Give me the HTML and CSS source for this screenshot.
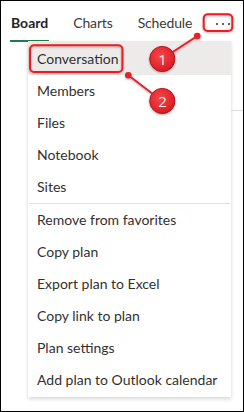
FILE: index.html
```html
<!DOCTYPE html>
<html>
<head>
<meta charset="utf-8">
<link rel="stylesheet" href="styles.css">
</head>
<body>
<div class="frame">
<nav class="tabs">
  <div class="tab active">Board</div>
  <div class="tab">Charts</div>
  <div class="tab">Schedule</div>
  <div class="more"><span class="dot"></span><span class="dot"></span><span class="dot"></span></div>
</nav>
<div class="content"><div class="strip"></div></div>
<div class="menu">
  <div class="item first">Conversation</div>
  <div class="item">Members</div>
  <div class="item">Files</div>
  <div class="item">Notebook</div>
  <div class="item">Sites</div>
  <div class="divider"></div>
  <div class="item">Remove from favorites</div>
  <div class="item">Copy plan</div>
  <div class="item">Export plan to Excel</div>
  <div class="item">Copy link to plan</div>
  <div class="item">Plan settings</div>
  <div class="item">Add plan to Outlook calendar</div>
</div>
<svg class="annot" width="242" height="410" viewBox="1 1 242 410">
  <defs>
    <radialGradient id="bub" cx="0.42" cy="0.38" r="0.65">
      <stop offset="0" stop-color="#f2484c"/>
      <stop offset="0.75" stop-color="#e3252b"/>
      <stop offset="1" stop-color="#c91b21"/>
    </radialGradient>
    <filter id="sh" x="-30%" y="-30%" width="160%" height="160%">
      <feDropShadow dx="0" dy="1" stdDeviation="1" flood-color="#000" flood-opacity="0.3"/>
    </filter>
  </defs>
  <g filter="url(#sh)">
    <rect x="203.7" y="14.3" width="28.6" height="16.6" rx="4" fill="none" stroke="#ee1c24" stroke-width="2"/>
    <rect x="30" y="45.3" width="92.4" height="26.6" rx="4" fill="none" stroke="#ee1c24" stroke-width="2"/>
    <line x1="162" y1="59" x2="197.3" y2="36" stroke="#e3222a" stroke-width="2"/>
    <circle cx="197.3" cy="36" r="3.3" fill="#e3222a"/>
    <line x1="162" y1="101" x2="128.3" y2="75.3" stroke="#e3222a" stroke-width="2"/>
    <circle cx="128.3" cy="75.3" r="3.3" fill="#e3222a"/>
    <circle cx="162.3" cy="59" r="12.6" fill="url(#bub)" stroke="#b5151b" stroke-width="1"/>
    <circle cx="162.3" cy="101" r="12.6" fill="url(#bub)" stroke="#b5151b" stroke-width="1"/>
  </g>
  <text class="num" x="162.5" y="64.5" text-anchor="middle">1</text>
  <text class="num" x="162.5" y="106.5" text-anchor="middle">2</text>
</svg>
</div>
</body>
</html>
```

FILE: styles.css
```css
html, body {
  margin: 0;
  padding: 0;
}
body {
  background: #fff;
  font-family: Lato, "Noto Sans", sans-serif;
  color: #323130;
}
.frame {
  width: 244px;
  height: 412px;
  box-sizing: border-box;
  border: 1px solid #000;
  position: relative;
  overflow: hidden;
}
.tabs {
  display: flex;
  align-items: flex-start;
  gap: 23px;
  padding-left: 9px;
  height: 41px;
}
.tab {
  font-size: 14px;
  line-height: 20px;
  padding-top: 12px;
  height: 27px;
  border-bottom: 2px solid transparent;
  color: #3b3a39;
  padding-left: 1px;
  padding-right: 1px;
}
.tab.active {
  font-weight: 700;
  color: #252423;
  border-bottom-color: #237b4b;
}
.tab + .tab {
  letter-spacing: -0.15px;
}
.more {
  display: flex;
  gap: 4px;
  height: 2px;
  margin-top: 22px;
  margin-left: auto;
  margin-right: 19px;
}
.dot {
  width: 2px;
  height: 2px;
  border-radius: 50%;
  background: #323130;
}
.strip {
  margin-top: 68px;
  margin-left: 120px;
  height: 1px;
  background: #e1dfdd;
}
.menu {
  position: absolute;
  left: 27px;
  top: 40px;
  width: 203px;
  background: #fff;
  padding-bottom: 1px;
  box-shadow: 0 1.6px 4px rgba(0,0,0,0.16), 0 0.3px 1px rgba(0,0,0,0.12);
}
.item {
  font-size: 14px;
  height: 32px;
  line-height: 32px;
  padding-left: 9px;
  white-space: nowrap;
  color: #323130;
}
.item.first {
  background: #edebe9;
  padding-top: 2px;
}
.divider {
  height: 1px;
  margin: 0 1px;
  background: #e1dfdd;
}
.annot {
  position: absolute;
  left: 0;
  top: 0;
}
.num {
  font-family: "Open Sans", "Noto Sans", sans-serif;
  font-size: 15px;
  fill: #fbeaea;
}
```
